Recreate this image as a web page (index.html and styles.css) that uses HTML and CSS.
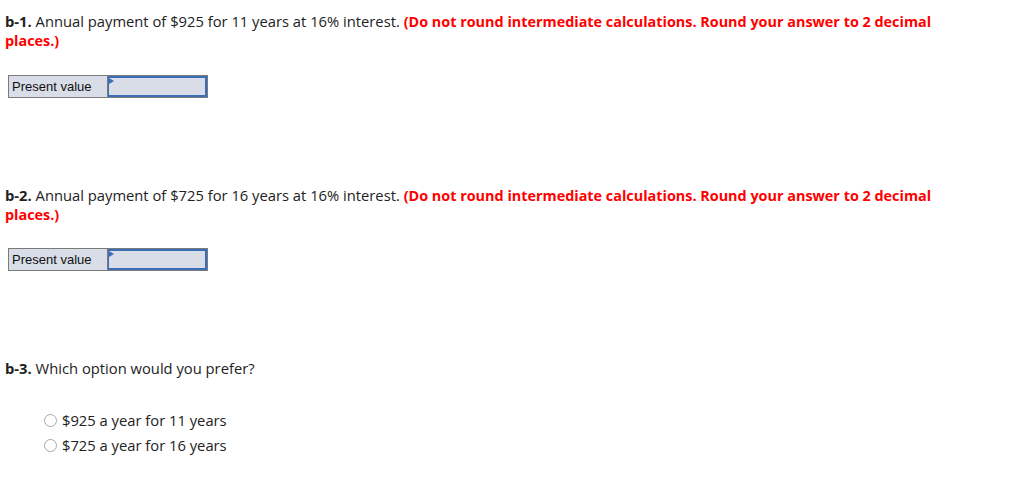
FILE: index.html
```html
<!DOCTYPE html>
<html>
<head>
<meta charset="utf-8">
<link rel="stylesheet" href="styles.css">
</head>
<body>
<div class="page">
  <section class="part">
    <p class="q"><b>b-1.</b> Annual payment of $925 for 11 years at 16% interest. <span class="warn">(Do not round intermediate calculations. Round your answer to 2 decimal places.)</span></p>
    <div class="answer">
      <div class="label">Present value</div>
      <div class="input"><span class="flag"></span></div>
    </div>
  </section>
  <section class="part part2">
    <p class="q"><b>b-2.</b> Annual payment of $725 for 16 years at 16% interest. <span class="warn">(Do not round intermediate calculations. Round your answer to 2 decimal places.)</span></p>
    <div class="answer">
      <div class="label">Present value</div>
      <div class="input"><span class="flag"></span></div>
    </div>
  </section>
  <section class="part part3">
    <p class="q"><b>b-3.</b> Which option would you prefer?</p>
    <ul class="options">
      <li><span class="radio"></span>$925 a year for 11 years</li>
      <li><span class="radio"></span>$725 a year for 16 years</li>
    </ul>
  </section>
</div>
</body>
</html>
```
FILE: styles.css
```css
html, body { margin: 0; padding: 0; background: #fff; }
.page {
  padding: 12px 0 0 5px;
  font-family: "Open Sans", sans-serif;
  font-size: 14.75px;
  color: #222;
}
.q { margin: 0; line-height: 19px; width: 950px; }
.q b { font-weight: 700; }
.warn { color: #f00; font-weight: 700; font-size: 14.4px; }
.answer {
  display: flex;
  margin: 25px 0 0 3px;
  width: 200px;
  height: 23px;
  border: 1px solid #7b7b7b;
  box-sizing: border-box;
  background: #d8dde8;
}
.label {
  width: 99px;
  border-right: 1px solid #7b7b7b;
  font-family: "Liberation Sans", Arial, sans-serif;
  font-size: 13px;
  color: #111;
  line-height: 21px;
  padding-left: 3px;
  box-sizing: border-box;
}
.input {
  flex: 1;
  border: 2px solid #3a6fb7;
  border-left-width: 1px;
  position: relative;
}
.flag {
  position: absolute;
  left: 0;
  top: 0;
  width: 0; height: 0;
  border-top: 3px solid transparent;
  border-bottom: 3px solid transparent;
  border-left: 5px solid #3a6fb7;
}
.part2 { margin-top: 88px; }
.part2 .answer { margin-top: 24px; }
.part3 { margin-top: 88px; }
.options { list-style: none; margin: 30px 0 0 38px; padding: 0; }
.options li { display: flex; align-items: center; height: 25px; line-height: 25px; }
.radio {
  width: 11px; height: 11px;
  border: 1px solid #a8a8a8;
  border-radius: 50%;
  margin: 0 5px 0 1px;
  background: #fff;
}
```
